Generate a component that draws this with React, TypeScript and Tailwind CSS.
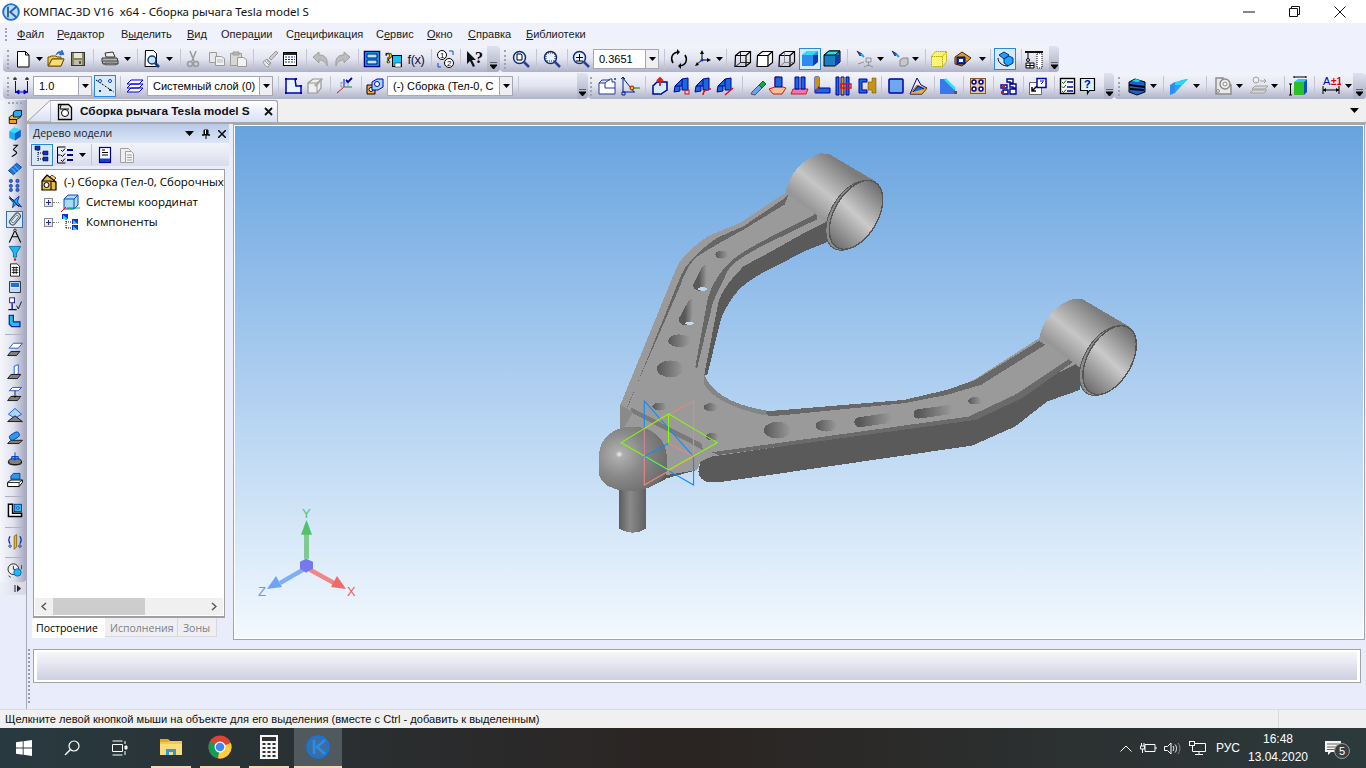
import type { ReactNode } from "react";

// small helpers for the toolbars
function Ic({ children, w = 20, h = 20 }: { children: ReactNode; w?: number; h?: number }) {
  return (
    <svg width={w} height={h} viewBox={`0 0 ${w} ${h}`} className="block shrink-0">
      {children}
    </svg>
  );
}

function S({ c, children }: { c: string; children?: ReactNode }) {
  return <div className={`flex items-center justify-center shrink-0 ${c}`}>{children}</div>;
}

const Drop = () => (
  <Ic w={7} h={4}>
    <path d="M0 0h7L3.5 4z" fill="#000" />
  </Ic>
);
const Sep = () => <div className="w-px h-[21px] bg-[#c3c5d3] shrink-0" />;
const Grip = () => <div className="w-0 h-[19px] border-l-2 border-dotted border-[#a0a2b8]" />;
const Handle = ({ c }: { c: string }) => (
  <div className={`h-full shrink-0 flex items-end justify-center pb-[3px] rounded-r-[4px] bg-linear-to-b from-[#dfe2ee] to-[#a9abc2] ${c}`}>
    <Ic w={7} h={7}>
      <path d="M0 0h7M0 3h7L3.5 7z" fill="#000" stroke="#000" strokeWidth="1" />
    </Ic>
  </div>
);

function Combo({ c, text }: { c: string; text: string }) {
  return (
    <div className={`h-[20px] shrink-0 flex border border-[#a6a7b3] bg-white ${c}`}>
      <div className="flex-1 overflow-hidden whitespace-nowrap pl-[5px] leading-[18px] text-[11px] text-black">{text}</div>
      <div className="w-[13px] bg-[#eeeef3] border-l border-[#a6a7b3] flex items-center justify-center">
        <Drop />
      </div>
    </div>
  );
}

function Sel({ children }: { children: ReactNode }) {
  return (
    <div className="w-[22px] h-[22px] shrink-0 flex items-center justify-center border border-[#2a88d8] bg-[#d8eafa]">
      {children}
    </div>
  );
}

const N = "#00009c";
const G = "#9b9b9b";

// --- row 1 icons
const INew = () => (
  <Ic>
    <path d="M4.5 2.5h8l3.5 3.5v12H4.5z" fill="#fff" stroke="#000" />
    <path d="M12.5 2.5v3.5H16" fill="none" stroke="#000" />
  </Ic>
);
const IOpen = () => (
  <Ic>
    <path d="M2 17V8h2l1-1h5l1 1h4v2H6l-4 7h13l3-7h-3" fill="#f3c94f" stroke="#6d5200" />
    <path d="M2.500 17l3.500-7h12l-3 7z" fill="#f8dc7c" stroke="#6d5200" />
    <path d="M10 6c1-3 3-4 5-3.500l1-1.500 2 4.500-4.500 .5 1-1.500c-2-.5-3 0-4.500 1.500z" fill="#1878e8" stroke="#0040a0" strokeWidth=".5" />
  </Ic>
);
const ISave = () => (
  <Ic>
    <rect x="3.500" y="3.500" width="13" height="13" fill="#8d865a" stroke="#333" />
    <rect x="6" y="4" width="8" height="5" fill="#e5e5d8" />
    <rect x="6" y="11" width="8" height="5" fill="#bdbdb0" />
    <rect x="11" y="12" width="2" height="3" fill="#555" />
  </Ic>
);
const IPrint = () => (
  <Ic>
    <path d="M5 4l8-1 2 5H6z" fill="#eee" stroke="#333" />
    <path d="M2 9h15l1 3v3H3l-1-3z" fill="#b4b4b4" stroke="#333" />
    <path d="M3 12h15" stroke="#444" />
    <path d="M5 14h11v2H5z" fill="#888" stroke="#333" strokeWidth=".5" />
    <rect x="14" y="10" width="2" height="1" fill="#e8d020" />
  </Ic>
);
const IPreview = () => (
  <Ic>
    <path d="M3.500 1.500h8l3 3v13h-11.500z" fill="#fff" stroke="#000" />
    <circle cx="10" cy="11" r="4" fill="#cfe4ff" stroke="#00408c" strokeWidth="1.500" />
    <path d="M13 14l4 4" stroke="#00408c" strokeWidth="2.500" />
  </Ic>
);
const ICut = () => (
  <Ic>
    <path d="M7 2l4 10M13 2l-4 10" stroke={G} strokeWidth="1.500" />
    <circle cx="7" cy="15" r="2.500" fill="none" stroke={G} strokeWidth="1.500" />
    <circle cx="13" cy="15" r="2.500" fill="none" stroke={G} strokeWidth="1.500" />
  </Ic>
);
const ICopy = () => (
  <Ic>
    <path d="M2.500 3.500h7v10h-7z" fill="#e8e8e8" stroke={G} />
    <path d="M8.500 7.500h6l3 2v7h-9z" fill="#f2f2f2" stroke={G} />
    <path d="M10 11h6M10 13h6" stroke="#b8b8b8" />
  </Ic>
);
const IPaste = () => (
  <Ic>
    <path d="M2.500 4.500h11v12h-11z" fill="#d8d8d0" stroke={G} />
    <path d="M5 3h6v3H5z" fill="#b8b8b8" stroke={G} />
    <path d="M9.500 8.500h6l3 2v7h-9z" fill="#f2f2f2" stroke={G} />
  </Ic>
);
const IBrush = () => (
  <Ic>
    <path d="M3 13l4-3 4 4-3 4c-2 0-4-3-5-5z" fill="#ececec" stroke={G} />
    <path d="M9 9l7-7 2 2-7 7z" fill="#ccc" stroke={G} />
    <path d="M5 12l4 4M7 11l3 4" stroke={G} />
  </Ic>
);
const ITable = () => (
  <Ic>
    <rect x="3.500" y="3.500" width="13" height="13" fill="#fff" stroke="#000" />
    <path d="M4 4h12v2H4z" fill="#222" />
    <path d="M5 8h10M5 10.500h10M5 13h10" stroke="#0030c0" strokeDasharray="2 1" />
  </Ic>
);
const IUndo = ({ flip }: { flip?: boolean }) => (
  <Ic>
    <g transform={flip ? "translate(20 0) scale(-1 1)" : undefined}>
      <path d="M2 8l6-5v3c6 0 9 3 8 11-1-4-4-6-8-6v3z" fill="#bdbdbd" stroke="#a0a0a0" />
    </g>
  </Ic>
);
const IBlueBox = () => (
  <Ic>
    <rect x="2.500" y="2.500" width="15" height="15" fill="#14c0f0" stroke="#000080" strokeWidth="1.500" />
    <rect x="5" y="5" width="10" height="4" fill="#b0ecff" stroke="#000080" />
    <rect x="5" y="11" width="10" height="4" fill="#b0ecff" stroke="#000080" />
  </Ic>
);
const IYellowQ = () => (
  <Ic>
    <rect x="8.500" y="6.500" width="9" height="11" fill="#1cc0f0" stroke="#000" />
    <rect x="11" y="14" width="6" height="4" fill="#fff" stroke="#000" strokeWidth=".5" />
    <text x="1" y="14" fontSize="15" fontWeight="700" fill="#f0e020" stroke="#000" strokeWidth=".7" fontFamily="Liberation Serif">?</text>
  </Ic>
);
const IFx = () => <span className="font-['Liberation_Sans'] text-[13px] leading-none text-[#101050] tracking-[-0.5px]">f(x)</span>;
const I12 = () => (
  <Ic>
    <circle cx="6" cy="6" r="4.500" fill="#fff" stroke="#000" />
    <circle cx="13" cy="14" r="4.500" fill="#fff" stroke="#000" />
    <text x="4" y="9" fontSize="8" fontFamily="Liberation Sans" fill="#000">1</text>
    <text x="11" y="17" fontSize="8" fontFamily="Liberation Sans" fill="#000">2</text>
    <path d="M13 2h4v4M5 18H2v-4" fill="none" stroke="#0050d0" />
  </Ic>
);
const IArrowQ = () => (
  <Ic>
    <path d="M1 2v13l3-3 3 6 2-1-3-6h4z" fill="#101018" />
    <text x="9" y="14" fontSize="16" fontWeight="700" fill="#000" fontFamily="Liberation Serif">?</text>
  </Ic>
);
const Lens = ({ children }: { children?: ReactNode }) => (
  <Ic>
    <circle cx="8.500" cy="8.500" r="6" fill="#e8f2ff" stroke="#0c2e7a" strokeWidth="1.500" />
    {children}
    <path d="M13 13l5 5" stroke="#2a3f95" strokeWidth="2.500" />
  </Ic>
);
const IRotate = () => (
  <Ic>
    <path d="M4 14C1 9 3 4 9 3M16 6c3 5 1 10-5 11" fill="none" stroke="#000" strokeWidth="1.500" />
    <path d="M8 0l3 3-3 3zM12 14l-3 3 3 3z" fill="#000" />
  </Ic>
);
const IAxes = () => (
  <Ic>
    <path d="M9 11V3M9 11l7 0M9 11l-6 5" stroke="#000" fill="none" />
    <path d="M9 1l-2 4h4zM18 11l-4-2v4zM2 17l4-1-2-3z" fill="#000" />
    <circle cx="9" cy="11" r="1.500" fill="#1030d0" />
  </Ic>
);
const ICube = ({ variant }: { variant: number }) => (
  <Ic>
    <path d="M2.500 6.500l5-4h10v11l-5 4h-10.500z" fill={variant === 1 ? "#fff" : "none"} stroke="#000" strokeWidth="1.200" />
    <path d="M2.500 6.500h10.500v11M13 6.500l4.500-4" fill="none" stroke="#000" strokeWidth="1.200" />
    {variant !== 1 && <path d="M7.500 2.500v11H17.500M7.500 13.500l-5 4" fill="none" stroke={variant === 0 ? "#000" : "#777"} strokeWidth=".8" />}
  </Ic>
);
const ISolid = ({ dark }: { dark?: boolean }) => (
  <Ic>
    <path d="M2 6l5-4h11v11l-5 4H2z" fill={dark ? "#1c7ec0" : "#2a8cf0"} stroke={dark ? "#000" : "none"} />
    <path d="M2 6l5-4h11l-5 4z" fill="#28e0ee" stroke={dark ? "#000" : "none"} />
    <path d="M13 6h5v7l-5 4z" fill="#0c3fa8" />
  </Ic>
);
const ILight = ({ cube }: { cube?: boolean }) => (
  <Ic>
    <path d="M2 2l5 3-2 2z" fill="#1858c8" stroke="#003" strokeWidth=".6" />
    <path d="M6 5l3 3" stroke="#20a0ff" strokeWidth="2" />
    {cube ? (
      <path d="M10 11l3-2h5v6l-3 2h-5z" fill="#c8c8c8" stroke="#888" />
    ) : (
      <path d="M11 9h5v4h-5zM13.500 13v4M9 18l4.500-2 4.500 2M3 15l6-2" fill="none" stroke="#909090" />
    )}
  </Ic>
);
const IYellowBox = () => (
  <Ic>
    <path d="M2.500 7.500l4-5h11v10l-4 5h-11z" fill="#f8f578" stroke="#b8a800" strokeDasharray="1.500 .7" />
    <path d="M2.500 7.500h11v10M13.500 7.500l4-5" fill="none" stroke="#b8a800" strokeDasharray="1.500 .7" />
  </Ic>
);
const IDiamond = () => (
  <Ic>
    <path d="M2 8L9 3l9 6-9 8-7-2z" fill="#e89a20" stroke="#402800" />
    <path d="M4 8h8v7H4z" fill="#0a30c0" stroke="#000060" />
    <path d="M6 10h4v3H6z" fill="#fff" />
  </Ic>
);
const IWrap = () => (
  <Ic>
    <path d="M4 6l5-3 5 3-5 4z" fill="#20a0f0" stroke="#003090" />
    <path d="M9 10l5-3 4 2v5l-5 3-4-3z" fill="#1ca8ff" stroke="#003090" />
    <path d="M3 9c0 5 5 8 10 8" fill="none" stroke="#000" />
  </Ic>
);
const ICrane = () => (
  <Ic>
    <path d="M1 2h18v2H1z" fill="#111" />
    <path d="M13 4h5v15h-5z" fill="#fff" stroke="#000" strokeDasharray="1 1" />
    <path d="M4 4v5" stroke="#000" />
    <circle cx="4" cy="11" r="1.500" fill="none" stroke="#000" />
    <path d="M2 14h8v5H2zM6 14v5M2 16.500h8" fill="#fff" stroke="#000" />
  </Ic>
);

// --- row 2 icons
const IDim = () => (
  <Ic>
    <path d="M3 1v3M1 3h4M15 1v3M13 3h4" stroke="#000" />
    <path d="M3.500 5v12M15.500 5v12" stroke="#0000d0" />
    <path d="M4 16h11M4 16l3-2v4zM15 16l-3-2v4z" fill="#0000d0" stroke="#0000d0" />
  </Ic>
);
const ISnap = () => (
  <Ic>
    <path d="M1 4l18 12" stroke="#000" strokeDasharray="2 1.500" />
    <circle cx="5" cy="5" r="1.500" fill="#fff" stroke="#0040c0" />
    <circle cx="15" cy="5" r="1.500" fill="#fff" stroke="#0040c0" />
    <path d="M14 14h2M15 13v2M4 15h2M5 14v2" stroke="#000" />
  </Ic>
);
const ILayers = () => (
  <Ic>
    <path d="M2 8l4-4h12l-4 4zM2 12l4-4h12l-4 4zM2 16l4-4h12l-4 4z" fill="#fff" stroke="#0000e0" />
  </Ic>
);
const IPoly = () => (
  <Ic>
    <path d="M3 3h9l1 7h5v7H3z" fill="#e8f4ff" stroke="#0000c0" strokeWidth="1.500" />
    <path d="M2 2h2v2H2zM12 2h2v2h-2zM2 16h2v2H2zM17 16h2v2h-2zM17 9h2v2h-2z" fill="#0000c0" />
  </Ic>
);
const IPolyGray = () => (
  <Ic>
    <path d="M3 7l5-4h8v9l-4 5H3z" fill="#efefef" stroke="#969696" strokeWidth="1.200" />
    <path d="M3 7h9v10M12 7l4-4" fill="none" stroke="#969696" />
    <path d="M9 9l8-7 1 1-7 8z" fill="#aaa" />
  </Ic>
);
const ICsys = () => (
  <Ic>
    <path d="M9 11V3" stroke="#0000e0" />
    <path d="M9 11h8" stroke="#00a000" />
    <path d="M9 11l-7 6" stroke="#e01010" />
    <path d="M6 6l3 2 4-2v5H6z" fill="none" stroke="#80a0d0" />
    <path d="M11 4l2 2 4-4" fill="none" stroke="#0000a0" strokeWidth="1.800" />
  </Ic>
);
const IAsm = () => (
  <Ic>
    <path d="M2 9h8v9H2z" fill="#f0b040" stroke="#000" />
    <circle cx="6" cy="13.500" r="2" fill="#fff" stroke="#000" />
    <path d="M7 6l5-3h6v8l-5 3H7z" fill="#9ed8ff" stroke="#0000c0" />
    <circle cx="12" cy="8" r="2.500" fill="#fff" stroke="#0000c0" />
  </Ic>
);
const IPartGray = () => (
  <Ic>
    <path d="M2 7h6l5-4h2v3h3v12H2z" fill="#fff" stroke="#2038a0" />
    <path d="M8 7v5h10M2 7l3-3h8" fill="none" stroke="#2038a0" />
    <circle cx="18" cy="3" r="1" fill="#2038a0" />
  </Ic>
);
const IPointer = () => (
  <Ic>
    <path d="M3 2v14h12M3 2l11 14" fill="none" stroke="#0020a0" />
    <circle cx="12" cy="12" r="2" fill="#f0c020" stroke="#c00000" />
    <path d="M14 12h6" stroke="#008000" />
    <path d="M1 3l2-2 2 2M2 16h3v3H2z" fill="none" stroke="#0020a0" />
  </Ic>
);
const Prof = ({ children }: { children?: ReactNode }) => (
  <Ic>
    <path d="M2 16l1-6 7-7 6-1v12h-6v-4H8v5z" fill="#1c68d8" stroke={N} />
    <path d="M10 3v7M3 10h5" stroke={N} fill="none" />
    {children}
  </Ic>
);
const IExtrude = () => (
  <Ic>
    <path d="M3 10h8v8H3z" fill="#d8ecff" stroke={N} strokeWidth="1.500" />
    <path d="M3 10l4-4h10v8l-6 4" fill="#d8ecff" stroke={N} strokeWidth="1.500" />
    <path d="M10 10V3M7 5l3-3 3 3" fill="none" stroke="#e01818" strokeWidth="1.800" />
  </Ic>
);
const ISlot = () => (
  <Ic>
    <path d="M5 16l11-11 3 3-11 11-4-1z" fill="#6aa4ec" stroke="#555" />
    <path d="M12 9l4-4 3 3-4 4z" fill="#11a840" stroke="#065" />
  </Ic>
);
const IPlateU = () => (
  <Ic>
    <path d="M7 1h4v9l7 2-4 6H5l-4-5 6-2z" fill="#f4c090" stroke="#e01010" />
    <path d="M7 1h7v10H7z" fill="#1a68e0" stroke={N} />
  </Ic>
);
const IPlateDouble = () => (
  <Ic>
    <path d="M3 13h15l-2 5H1z" fill="#f078b0" stroke="#e01010" />
    <path d="M5 1h4v12H5zM11 1h4v12h-4z" fill="#1a68e0" stroke={N} />
  </Ic>
);
const ICorner = () => (
  <Ic>
    <path d="M3 1h4v11h11v5H3z" fill="#1a68e0" stroke={N} />
    <path d="M3 1h4v9L3 14z" fill="#c8960c" />
    <path d="M3 17L8 11" stroke="#e01010" />
  </Ic>
);
const IBars = () => (
  <Ic>
    <path d="M3 1h3v18H3z" fill="#1a68e0" stroke={N} />
    <path d="M8 1h3v18H8z" fill="#e0a010" stroke={N} />
    <path d="M13 1h3v18h-3z" fill="#1a68e0" stroke={N} />
    <path d="M8 8h10v4H8z" fill="none" stroke="#e01010" strokeWidth="1.400" />
  </Ic>
);
const IBracket = () => (
  <Ic>
    <path d="M2 3h8v3H5v8h5v3H2z" fill="#1a68e0" stroke={N} />
    <path d="M11 6h4V2h4v15h-4v-3h-4z" fill="#c8960c" stroke="#604000" strokeWidth=".5" />
  </Ic>
);
const ISquare = () => (
  <Ic>
    <rect x="3" y="3" width="14" height="14" rx="1" fill="#6aa8f0" stroke={N} strokeWidth="1.500" />
  </Ic>
);
const IChamfer = () => (
  <Ic>
    <path d="M2 18L9 2l4 7 6 3-5 6z" fill="#f8f0d8" stroke={N} />
    <path d="M2 18l7-9 7 3 3 0-5 6z" fill="#e8b040" stroke="#604000" strokeWidth=".6" />
    <path d="M5 16l5-6 6 3" fill="#1a68e0" stroke={N} />
  </Ic>
);
const IFillet = () => (
  <Ic>
    <path d="M2 3h5l10 10v5H2z" fill="#3a78e8" />
    <path d="M7 3l10 10" stroke="#20e8f0" strokeWidth="2.500" />
    <rect x="16" y="15" width="3" height="3" fill="#555" />
  </Ic>
);
const IArray = () => (
  <Ic>
    <rect x="2.500" y="2.500" width="15" height="15" fill="#e8c890" stroke="#8a5a20" />
    {[6, 13].map((x) => [6, 13].map((y) => <circle key={`${x}${y}`} cx={x} cy={y} r="2" fill="#fff" stroke={N} strokeWidth="1.500" />))}
  </Ic>
);
const ITreeBlocks = () => (
  <Ic>
    <path d="M9 3h6v4h-3v-1H9zM12 8h6v4h-3v-1h-3zM3 9h6v3H3zM5 14h5v4H5zM12 13h6v5h-6z" fill="#fff" stroke={N} strokeWidth="1.400" />
    <rect x="4" y="9" width="3" height="3" fill="#e01010" />
    <rect x="3" y="15" width="3" height="3" fill="#e01010" />
  </Ic>
);
const IRebuild = () => (
  <Ic>
    <path d="M1.500 6.500h12v12h-12z" fill="#fff" stroke="#666" />
    <path d="M9 2.500h9v9H9z" fill="#fff" stroke="#0000c0" strokeWidth="1.500" />
    <path d="M12 5h4M13 8l2-2" stroke="#0000c0" />
    <path d="M4 15l5-5M4 11v4h4" fill="none" stroke="#000" strokeWidth="1.500" />
  </Ic>
);
const IChecklist = () => (
  <Ic>
    <rect x="2.500" y="2.500" width="14" height="15" fill="#fff" stroke="#000" strokeWidth="1.400" />
    <path d="M4 6l1.500 1.500L8 4.500M4 10.500l1.500 1.500L8 9M4 15l1.500 1.500L8 13.500" fill="none" stroke="#006000" />
    <path d="M9 6h6M9 11h6M9 15h6" stroke="#0000c0" strokeWidth="1.500" />
  </Ic>
);
const IHelp = () => (
  <Ic>
    <path d="M2.500 2.500h14v12h-5l-2 3v-3h-7z" fill="#d8f2ff" stroke="#000" strokeWidth="1.200" />
    <text x="6" y="12" fontSize="11" fontWeight="700" fill="#00009c" fontFamily="Liberation Sans">?</text>
  </Ic>
);
const IStripe = () => (
  <Ic>
    <path d="M2 6l6-3 10 3v10l-8 3-8-3z" fill="#2060d0" stroke="#000" />
    <path d="M2 9l16 2M3 13l14 1" stroke="#000" strokeWidth="2" />
    <path d="M5 5l4-2 5 2-4 1z" fill="#20e0f0" />
  </Ic>
);
const IBeam = () => (
  <Ic>
    <path d="M1 9l5-3v11l-5 2z" fill="#2c8cf0" />
    <path d="M1 9l12-5 6-1-6 6-7 8V6z" fill="#28a0ff" />
    <path d="M6 6l13-3-6 6H6z" fill="#26d8f4" />
  </Ic>
);
const IGrayPart = () => (
  <Ic>
    <path d="M3 2h7v7h8v9H3z" fill="#e8e8e8" stroke="#8a8a8a" strokeWidth="1.400" />
    <circle cx="12" cy="8" r="5" fill="#eee" stroke="#8a8a8a" strokeWidth="1.400" />
    <circle cx="12" cy="8" r="2" fill="#fff" stroke="#8a8a8a" />
    <circle cx="5" cy="15" r="1.500" fill="none" stroke="#8a8a8a" />
  </Ic>
);
const IGraySheet = () => (
  <Ic>
    <circle cx="7" cy="4" r="3" fill="none" stroke="#a0a0a0" />
    <path d="M11 5h6M15 3l2 2-2 2" fill="none" stroke="#a0a0a0" />
    <path d="M3 13l3-3h13l-3 3zM1 17l3-3h14l-3 3z" fill="#d8d8d8" stroke="#a0a0a0" />
  </Ic>
);
const IGreenBox = () => (
  <Ic>
    <path d="M0 8h3M0 19h3M1.500 8v11M5 2v-2M17 2v-2M5 1h12" stroke="#000" />
    <path d="M5 6h10v13H5z" fill="#2cc028" />
    <path d="M5 6l4-3h9l-3 3z" fill="#30c8f0" />
    <path d="M15 6l3-3v13l-3 3z" fill="#0c50c0" />
  </Ic>
);
const ITol = () => (
  <Ic>
    <text x="2" y="9" fontSize="11" fill="#0000c0" fontFamily="Liberation Sans">A</text>
    <text x="10" y="9" fontSize="10" fontWeight="700" fill="#e00000" fontFamily="Liberation Sans">±1</text>
    <path d="M2 10v8M18 10v8M2 14h16" stroke="#000" />
    <path d="M2 14l3-2v4zM18 14l-3-2v4z" fill="#000" />
  </Ic>
);

// --- tree and side bar icons
const ITreeView = () => (
  <Ic>
    <path d="M6 3v14M6 8h6M6 14h6" stroke="#000" strokeDasharray="1 1" />
    <path d="M3 1h5v4H3zM11 6h5v4h-5zM11 12h5v4h-5z" fill="#1030d0" stroke="#000" strokeWidth=".5" />
  </Ic>
);
const IListCheck = () => (
  <Ic>
    <path d="M2.500 2h8M2.500 2v16M2.500 10h3M2.500 18h8" stroke="#000" fill="none" />
    <path d="M6 5l1.500 1.500L10 3.500M6 10l1.500 1.500L10 8.500M6 15l1.500 1.500L10 13.500" stroke="#000" fill="none" />
    <path d="M12 5h6M12 10h6M12 15h6" stroke="#00009c" strokeWidth="2" />
  </Ic>
);
const IBook = () => (
  <Ic>
    <rect x="4.500" y="2.500" width="11" height="15" fill="#fff" stroke="#000090" strokeWidth="1.200" />
    <path d="M7 5h3M7 7.500h6M7 10h6" stroke="#000" />
    <rect x="5" y="13.500" width="10" height="3.500" fill="#1040d8" />
  </Ic>
);
const IBookGray = () => (
  <Ic>
    <path d="M3.500 3.500h8l2 2v12h-10z" fill="#eee" stroke="#a0a0a0" />
    <path d="M8.500 6.500h6l2 2v9h-8z" fill="#f4f4f4" stroke="#a0a0a0" />
    <path d="M10 10h5M10 12.500h5M10 15h5" stroke="#a0a0a0" />
  </Ic>
);
const IAsmTree = () => (
  <Ic>
    <path d="M3 9l5-6 9 7v8H3z" fill="#f0b848" stroke="#000" strokeWidth="1.200" />
    <path d="M3 9h9l5 1M12 9v9" fill="none" stroke="#000" />
    <circle cx="7.500" cy="13" r="2.500" fill="#fff" stroke="#000" />
    <path d="M11 5l2-2 4 3-2 2z" fill="#f8d880" stroke="#000" strokeWidth=".7" />
  </Ic>
);
const ICoordTree = () => (
  <Ic>
    <path d="M4 7l4-4h10v10l-4 4M14 7l4-4" fill="#a8dcf4" stroke="#1048c0" />
    <path d="M4 7h10v10H4z" fill="#a8dcf4" stroke="#1048c0" />
    <path d="M7 16h13" stroke="#00a040" />
    <path d="M6 15l-5 5" stroke="#e01010" />
  </Ic>
);
const ICompTree = () => (
  <Ic>
    <path d="M6 7v10M6 10h6M6 16h6" stroke="#000" strokeDasharray="1 1" />
    <path d="M2 2h6v5H2zM12 7h6v5h-6zM12 13h6v5h-6z" fill="#1030d8" />
    <path d="M3 3l5 4H3zM13 8l5 4h-5zM13 14l5 4h-5z" fill="#20d8f0" />
  </Ic>
);
const Plus = () => (
  <div className="w-[9px] h-[9px] border border-[#8a8a8a] bg-linear-to-br from-white to-[#d8d8e0] flex items-center justify-center shrink-0">
    <Ic w={7} h={7}>
      <path d="M1 3.500h5M3.500 1v5" stroke="#1c2a88" />
    </Ic>
  </div>
);

const side: { h: string; node?: ReactNode; sep?: boolean; sel?: boolean }[] = [
  { h: "h-[16px]", node: <Ic><path d="M3 10l5-3h9v3l-5 3H3z" fill="#f0c040" stroke="#000" /><path d="M3 13h9v5H3z" fill="#f0a020" stroke="#000" /><path d="M8 4l3-2h7v6l-3 2H8z" fill="#30a8f0" stroke="#000" /></Ic> },
  { h: "h-[17px]", node: <Ic><path d="M3 7l6-5 8 3v8l-7 5-7-3z" fill="#28a8f0" /><path d="M3 7l6-5 8 3-7 4z" fill="#30e0f8" /><path d="M10 9l7-4v8l-7 5z" fill="#1060d0" /></Ic> },
  { h: "h-[18px]", node: <Ic><path d="M8 3h5l-5 5c0 2 4 2 4 4s-5 4-6 5" fill="none" stroke="#000" strokeWidth="1.300" /></Ic> },
  { h: "h-[17px]", node: <Ic><path d="M2 12l10-9 6 5-10 9z" fill="#1c78e0" stroke="#003090" /><path d="M6 9l6 6M9 6l6 6" stroke="#80d8ff" /></Ic> },
  { h: "h-[16px]", node: <Ic>{[5, 13].map((x) => [5, 11, 16].map((y) => <circle key={`${x}${y}`} cx={x} cy={y} r="2" fill="#3068e0" stroke="#002090" strokeWidth=".7" />))}</Ic> },
  { h: "h-[17px]", node: <Ic><path d="M3 5l6 3 6-5-2 7 5 6-7-3-4 4 1-6z" fill="#20a8f0" stroke="#0020a0" /><path d="M3 3l12 13" stroke="#000" /></Ic> },
  { h: "h-[18px]", sel: true, node: <Ic><rect x="6" y="1" width="8" height="18" rx="4" transform="rotate(40 10 10)" fill="none" stroke="#555" strokeWidth="1.500" /><rect x="8" y="4" width="4" height="12" rx="2" transform="rotate(40 10 10)" fill="none" stroke="#555" /></Ic> },
  { h: "h-[16px]", node: <Ic><path d="M10 3L3 18M10 3l7 15M6 11h8" fill="none" stroke="#000" strokeWidth="1.300" /><circle cx="10" cy="3" r="1.500" fill="#fff" stroke="#000" /></Ic> },
  { h: "h-[17px]", node: <Ic><path d="M3 2h14l-5 8v5H8v-5z" fill="#20b8f0" stroke="#0060a0" /><circle cx="10" cy="18" r="1.500" fill="#e01010" /></Ic> },
  { h: "h-[18px]", node: <Ic><path d="M4.500 2.500h8l3 3v12h-11z" fill="#fff" stroke="#000" /><path d="M6 7h8M6 10h8M6 13h8M8.500 6v9M11.500 6v9" stroke="#000" /></Ic> },
  { h: "h-[16px]", node: <Ic><rect x="3.500" y="3.500" width="13" height="13" fill="#e8f0ff" stroke="#000" /><rect x="5" y="5" width="10" height="5" fill="#1c70d8" /><rect x="5" y="11" width="10" height="4" fill="#b8d8ff" /></Ic> },
  { h: "h-[17px]", node: <Ic><rect x="3.500" y="2.500" width="6" height="6" fill="#fff" stroke="#000080" /><path d="M6.500 9v7M2 17h10" stroke="#000080" strokeWidth="1.500" /><path d="M12 12l2 4 4-9" fill="none" stroke="#000" /></Ic> },
  { h: "h-[18px]", node: <Ic><path d="M3 3h5v8h8v6H6l-3-3z" fill="#20c0f0" stroke="#0020a0" strokeWidth="1.500" /></Ic> },
  { h: "h-[8px]", sep: true },
  { h: "h-[22px]", node: <Ic><path d="M3 9l5-6h11l-5 6z" fill="#fff" stroke="#0040e0" /><path d="M1 18l4-5h11l-4 5z" fill="#808080" stroke="#000" /></Ic> },
  { h: "h-[23px]", node: <Ic><path d="M9 3l5-2v11l-5 3z" fill="#fff" stroke="#0040e0" /><path d="M1 18l4-5h12l-4 5z" fill="#808080" stroke="#000" /></Ic> },
  { h: "h-[21px]", node: <Ic><path d="M3 6l4-4h11l-4 4z" fill="#fff" stroke="#0040e0" /><path d="M1 18l4-5h12l-4 5z" fill="#808080" stroke="#000" /><path d="M10 6v8M8 12l2 2 2-2" fill="none" stroke="#000" /></Ic> },
  { h: "h-[22px]", node: <Ic><path d="M2 9l8-7 8 7-8 5z" fill="#a8d8ff" stroke="#0040e0" /><path d="M1 18l9-7 9 7z" fill="#808080" stroke="#000" /></Ic> },
  { h: "h-[22px]", node: <Ic><path d="M1 18l4-4h14l-4 4z" fill="#808080" stroke="#000" /><rect x="3" y="5" width="13" height="7" rx="3.500" transform="rotate(-30 10 9)" fill="#2898f0" stroke="#0040a0" /></Ic> },
  { h: "h-[21px]", node: <Ic><ellipse cx="10" cy="13" rx="8" ry="4" fill="#808080" stroke="#000" /><path d="M2 13v2c0 3 16 3 16 0v-2" fill="none" stroke="#000" /><path d="M6 7h8v3H6zM10 2v10" fill="#20b0f0" stroke="#0020c0" /></Ic> },
  { h: "h-[22px]", node: <Ic><path d="M1 13l4-3h14v3l-4 5H1z" fill="#fff" stroke="#000" strokeWidth="1.200" /><path d="M1 13h14v5M15 13l4-3" fill="none" stroke="#000" /><path d="M5 5l3-3h8v7H5z" fill="#2898f0" stroke="#003090" /></Ic> },
  { h: "h-[10px]", sep: true },
  { h: "h-[18px]", node: <Ic><path d="M2 3h5v11h11v4H2z" fill="#fff" stroke="#000" strokeWidth="1.800" /><rect x="9" y="3" width="9" height="9" fill="#20c0f0" stroke="#002090" /><circle cx="13.500" cy="7.500" r="1.500" fill="#fff" stroke="#002090" /></Ic> },
  { h: "h-[16px]", sep: true },
  { h: "h-[14px]", node: <Ic><path d="M9 3l3-2v15l-3 3z" fill="#f0b820" stroke="#806000" /><path d="M4 3c-2 3-2 6 0 9M16 3c2 3 2 6 0 9" fill="none" stroke="#0020c0" strokeWidth="1.500" /><circle cx="4" cy="15" r="1.500" fill="none" stroke="#002090" /><circle cx="16" cy="15" r="1.500" fill="none" stroke="#002090" /></Ic> },
  { h: "h-[16px]", sep: true },
  { h: "h-[10px]", node: <Ic><circle cx="8" cy="9" r="6.500" fill="#f0f0f0" stroke="#000" /><path d="M8 5v4l3 1" fill="none" stroke="#000" /><circle cx="13" cy="13" r="4.500" fill="#20b8f8" stroke="#0060a0" /><path d="M2 17l3 2M18 4v5" stroke="#333" /></Ic> },
];

function SideBar() {
  return (
    <div className="w-[27px] shrink-0 h-full border-r border-[#a9a9b3] bg-[#e9edfb] pt-px">
      <div className="w-[26px] rounded-br-[3px] bg-linear-to-r from-[#f6f7fd] via-[#e0e2ee] to-[#a5a7c0] pl-[3px]">
        <div className="h-[9px] flex items-start justify-center pt-[2px]">
          <div className="w-[14px] h-0 border-t-2 border-dotted border-[#a0a2b8]" />
        </div>
        {side.map((it, i) => (
          <div key={i} className={`${it.h} flex items-center justify-center`}>
            {it.sep ? (
              <div className="w-[19px] h-px bg-[#b0b2c2]" />
            ) : it.sel ? (
              <div className="w-[17px] h-[17px] shrink-0 flex items-center justify-center border border-[#3b6fa8] bg-[#d8eafa]">
                <div className="scale-[0.75]">{it.node}</div>
              </div>
            ) : (
              <div className="shrink-0 scale-[0.82]">{it.node}</div>
            )}
          </div>
        ))}
        <div className="h-[7px]" />
      </div>
      <div className="w-[26px] h-[13px] bg-linear-to-r from-[#eef0f8] to-[#d4d6e4] flex items-center justify-end pr-[4px] rounded-br-[2px]">
        <Ic w={8} h={7}>
          <path d="M1 0v7" stroke="#222" />
          <path d="M3 0l4 3.500L3 7z" fill="#222" />
        </Ic>
      </div>
    </div>
  );
}

function Tree() {
  return (
    <div className="ml-[2px] w-[200px] shrink-0 flex flex-col h-full">
      <div className="h-[19px] flex items-center pl-[4px] bg-linear-to-b from-[#b7c9e8] to-[#dde5f6] text-[10.5px] text-[#222] shrink-0">
        <span className="w-[152px]">Дерево модели</span>
        <Ic w={9} h={5}>
          <path d="M0 0h9L4.500 5z" fill="#000" />
        </Ic>
        <div className="w-[8px]" />
        <Ic w={8} h={10}>
          <path d="M2 1h4v5h2H0h2zM4 6v4" fill="#000" stroke="#000" />
          <path d="M3 1h1v4H3z" fill="#fff" />
        </Ic>
        <div className="w-[8px]" />
        <Ic w={8} h={8}>
          <path d="M0 0l8 8M8 0L0 8" stroke="#000" strokeWidth="1.500" />
        </Ic>
      </div>
      <div className="h-[23px] flex items-center pl-[2px] bg-linear-to-b from-[#f2f4fb] to-[#dadced] shrink-0">
        <Sel>
          <ITreeView />
        </Sel>
        <S c="w-[24px]"><IListCheck /></S>
        <S c="w-[10px]"><Drop /></S>
        <S c="w-[9px]"><Sep /></S>
        <S c="w-[18px]"><IBook /></S>
        <S c="w-[26px]"><IBookGray /></S>
      </div>
      <div className="flex-1 min-h-0 mt-[3px] mx-[4px] border border-[#a0a0a0] border-b-2 bg-white flex flex-col">
        <div className="flex-1 min-h-0 pt-[2px] pl-[5px] text-[11.5px] text-black overflow-hidden">
          <div className="h-[20px] flex items-center whitespace-nowrap">
            <IAsmTree />
            <span className="ml-[5px]">(-) Сборка (Тел-0, Сборочных</span>
          </div>
          <div className="h-[20px] flex items-center">
            <div className="ml-[5px]"><Plus /></div>
            <div className="w-[6px] h-0 border-t border-dotted border-[#888] mr-px" />
            <ICoordTree />
            <span className="ml-[6px]">Системы координат</span>
          </div>
          <div className="h-[20px] flex items-center">
            <div className="ml-[5px]"><Plus /></div>
            <div className="w-[6px] h-0 border-t border-dotted border-[#888] mr-px" />
            <ICompTree />
            <span className="ml-[6px]">Компоненты</span>
          </div>
        </div>
        <div className="h-[17px] mx-px mb-px bg-[#f0f0f0] flex items-center shrink-0">
          <S c="w-[18px]">
            <Ic w={6} h={9}><path d="M5 1L1 4.500 5 8" fill="none" stroke="#555" strokeWidth="1.500" /></Ic>
          </S>
          <div className="w-[92px] h-full bg-[#cdcdcd]" />
          <div className="flex-1" />
          <S c="w-[18px]">
            <Ic w={6} h={9}><path d="M1 1l4 3.500L1 8" fill="none" stroke="#555" strokeWidth="1.500" /></Ic>
          </S>
        </div>
      </div>
      <div className="h-[21px] shrink-0 flex ml-[3px] text-[10.5px] mb-[2px]">
        <div className="w-[73px] h-[20px] bg-white text-black pl-[4px] leading-[20px]">Построение</div>
        <div className="w-[73px] h-[19px] bg-[#efeff3] border-r border-b border-[#d8d8de] text-[#808080] pl-[5px] leading-[20px]">Исполнения</div>
        <div className="w-[39px] h-[19px] bg-[#efeff3] border-r border-b border-[#d8d8de] text-[#808080] pl-[5px] leading-[20px]">Зоны</div>
      </div>
    </div>
  );
}

function Cylinder({ id }: { id: string }) {
  return (
    <g>
      <defs>
        <linearGradient id={`${id}b`} gradientUnits="userSpaceOnUse" x1="680" y1="45" x2="575" y2="165">
          <stop offset="0" stopColor="#7c7c7c" />
          <stop offset=".6" stopColor="#c6c6c6" />
          <stop offset="1" stopColor="#979797" />
        </linearGradient>
        <linearGradient id={`${id}i`} gradientUnits="userSpaceOnUse" x1="778" y1="117" x2="710" y2="325">
          <stop offset="0" stopColor="#6c6c6c" />
          <stop offset=".5" stopColor="#cacaca" />
          <stop offset="1" stopColor="#6c6c6c" />
        </linearGradient>
      </defs>
      <path d="M548 155C555 105 590 55 645 37L668 38L802 122L780 220L700 320L665 295L668 248Z" fill={`url(#${id}b)`} />
      <ellipse cx="736" cy="223" rx="63" ry="112" transform="rotate(27 736 223)" fill="#8a8a8a" stroke="#5a5a5a" strokeWidth="3" />
      <ellipse cx="745" cy="221" rx="62" ry="111" transform="rotate(27 745 221)" fill={`url(#${id}i)`} stroke="#555" strokeWidth="4" />
    </g>
  );
}

const holes: [number, number, number, number][] = [
  [225, 682, 38, 25],
  [250, 598, 31, 19],
  [369, 340, 18, 12],
  [525, 866, 38, 25],
  [662, 852, 30, 18],
  [1078, 778, 19, 11],
  [195, 795, 20, 12],
  [338, 797, 20, 12],
  [343, 885, 18, 12],
];

function Arm() {
  return (
    <g transform="translate(590 140) scale(.35714 .33333)" shapeRendering="crispEdges">
      <defs>
        <linearGradient id="hole" gradientUnits="objectBoundingBox" x1="0" x2="1" y1="0" y2="0">
          <stop offset="0" stopColor="#585858" />
          <stop offset="1" stopColor="#9a9a9a" />
        </linearGradient>
        <linearGradient id="pin" x1="0" x2="1" y1="0" y2="0">
          <stop offset="0" stopColor="#5e5e5e" />
          <stop offset=".4" stopColor="#8a8a8a" />
          <stop offset="1" stopColor="#606060" />
        </linearGradient>
        <radialGradient id="ball" gradientUnits="userSpaceOnUse" cx="82" cy="938" r="170">
          <stop offset="0" stopColor="#f2f2f2" />
          <stop offset=".06" stopColor="#aeaeae" />
          <stop offset=".4" stopColor="#888" />
          <stop offset="1" stopColor="#5e5e5e" />
        </radialGradient>
      </defs>
      <path d="M660 225L670 300L600 330L520 375C470 400 430 425 405 460C385 490 370 520 365 540L328 702L318 700L360 480C370 450 385 425 430 375L500 335L600 275Z" fill="#5a5a5a" />
      <path d="M1372 650L1372 745L1280 780L1190 855L1070 912L360 1022L330 1022C310 1015 300 1000 305 980L310 960L340 945L1040 835C1070 830 1100 815 1130 795L1250 725Z" fill="#5a5a5a" />
      <path d="M160 1040L215 1010L300 985L305 960L215 960Z" fill="#5a5a5a" />
      <path d="M85 790L240 385C255 345 285 320 330 285L420 245L548 155L665 240L600 275L500 335L430 375C385 425 370 450 360 480L320 700C340 750 390 790 500 808L620 800L900 775C960 765 1020 745 1075 715L1258 590L1372 662L1250 725L1130 795C1100 815 1070 830 1040 835L340 945L310 960L300 985L215 1000L85 870Z" fill="#9a9a9a" />
      <path d="M320 700C340 750 390 790 500 808L490 822C400 800 340 770 318 725Z" fill="#858585" />
      <path d="M108 790L250 415C262 380 285 345 355 290L430 255L540 175L556 160L545 190L430 265C380 295 320 330 295 350C275 370 260 410 250 440L100 805Z" fill="#666" />
      <path d="M640 212L635 235L480 315C440 340 400 360 385 390L345 480L300 680L295 675L330 470C345 420 365 390 395 360C420 335 470 305 620 225Z" fill="#666" />
      <path d="M1258 598L1275 610L1095 730L1000 760L880 785L500 825L490 810L880 775L1000 745L1080 715Z" fill="#686868" />
      <path d="M1345 650L1355 660L1210 770L1080 835L360 940L340 932L1060 825L1190 760Z" fill="#6a6a6a" />
      <path d="M115 798L312 905L316 925L115 812Z" fill="#7a7a7a" />
      <path d="M85 790L120 812L100 850L85 870Z" fill="#8a8a8a" />
      {holes.map(([cx, cy, rx, ry]) => (
        <ellipse key={cx} cx={cx} cy={cy} rx={rx} ry={ry} fill="url(#hole)" />
      ))}
      <path d="M327 387L305 432" stroke="url(#hole)" strokeWidth="32" strokeLinecap="round" fill="none" />
      <ellipse cx="316" cy="443" rx="13" ry="5" fill="#c0d8f0" />
      <path d="M288 490L265 535" stroke="url(#hole)" strokeWidth="32" strokeLinecap="round" fill="none" />
      <ellipse cx="278" cy="546" rx="12" ry="4" fill="#c4daf2" />
      <path d="M755 842L845 828" stroke="url(#hole)" strokeWidth="30" strokeLinecap="round" fill="none" />
      <path d="M920 817L1015 803" stroke="url(#hole)" strokeWidth="28" strokeLinecap="round" fill="none" />
      <Cylinder id="c1" />
      <g transform="translate(710 435)">
        <Cylinder id="c2" />
      </g>
      <path d="M82 1030V1160Q120 1185 157 1160V1030Z" fill="url(#pin)" />
      <path d="M25 945C25 885 70 855 120 855C175 855 215 895 215 945V990C200 1030 150 1050 100 1048C60 1045 30 1025 25 1000Z" fill="url(#ball)" />
      <g fill="none" strokeWidth="3" shapeRendering="auto">
        <path d="M152 778V945L290 1030V945L152 778" stroke="#0a8cff" />
        <path d="M290 778L152 860V1030L290 945Z" stroke="#f08484" />
        <path d="M87 903L220 817L356 903L220 985Z" stroke="#84ff00" />
        <path d="M220 817V905" stroke="#84ff00" />
        <path d="M152 945L220 905" stroke="#0a8cff" />
        <path d="M220 905L290 945" stroke="#f08484" />
      </g>
    </g>
  );
}

function Triad() {
  return (
    <g fontFamily="Liberation Sans" fontSize="13">
      <path d="M304 531h5v26h-5z" fill="#7fcb8f" />
      <path d="M306.500 518L312 533H301z" fill="#53c06a" />
      <path d="M311 566l24 13-2 4-24-13z" fill="#f08686" />
      <path d="M346 587L331 585 337 574z" fill="#ee6b6b" />
      <path d="M302 566L279 579l2 4 23-13z" fill="#7fb0f5" />
      <path d="M267 587L282 585 276 574z" fill="#6fa4f5" />
      <path d="M300 560l6-3 7 3v7l-7 4-6-4z" fill="#7878ee" />
      <text x="302" y="516" fill="#52c070">Y</text>
      <text x="258" y="594" fill="#5c9cf5">Z</text>
      <text x="347" y="594" fill="#f05c5c">X</text>
    </g>
  );
}

function Chrome() {
  return (
    <Ic w={24} h={24}>
      <circle cx="12" cy="12" r="11.500" fill="#db4437" />
      <path d="M12 12L2 6.500A11.500 11.500 0 0 0 10 23.300z" fill="#0f9d58" />
      <path d="M12 12l10.800-4A11.500 11.500 0 0 1 10 23.300z" fill="#ffcd40" />
      <circle cx="12" cy="12" r="5.500" fill="#fff" />
      <circle cx="12" cy="12" r="4.300" fill="#4285f4" />
    </Ic>
  );
}

function Kompas({ s = 24, fill, k }: { s?: number; fill: string; k: string }) {
  return (
    <svg width={s} height={s} viewBox="0 0 24 24" className="block shrink-0">
      <circle cx="12" cy="12" r="10.500" fill={fill} stroke="#1a74d8" strokeWidth="2.500" />
      <path d="M8 5v14" stroke={k} strokeWidth="2.500" />
      <path d="M19 5l-8 7 8 7" fill="none" stroke={k} strokeWidth="2.500" />
    </svg>
  );
}

export default function App() {
  return (
    <div className="w-[1366px] h-[768px] flex flex-col overflow-hidden bg-[#eff2fc] font-['Open_Sans','Liberation_Sans',sans-serif] text-black">
      {/* title */}
      <div className="h-[23px] shrink-0 bg-white flex items-center pl-[2px] text-[11.5px] text-[#111]">
        <Kompas s={18} fill="#bcdcf8" k="#2a5f9e" />
        <span className="ml-[3px] whitespace-pre font-['Noto_Sans',sans-serif]">КОМПАС-3D V16  x64 - Сборка рычага Tesla model S</span>
        <div className="flex-1" />
        <S c="w-[46px]"><Ic w={12} h={2}><path d="M0 1h12" stroke="#111" /></Ic></S>
        <S c="w-[44px]"><Ic w={11} h={11}><path d="M.5 2.500h8v8h-8zM2.500 2.500v-2h8v8h-2" fill="none" stroke="#111" /></Ic></S>
        <S c="w-[48px]"><Ic w={12} h={12}><path d="M.5.5l11 11M11.500.5l-11 11" stroke="#111" /></Ic></S>
        <div className="w-[2px]" />
      </div>

      {/* menu */}
      <div className="h-[23px] shrink-0 flex items-center text-[11px] text-[#1a1a1a] font-['Liberation_Sans',sans-serif]">
        <S c="w-[17px]"><div className="h-[13px] w-0 border-l-2 border-dotted border-[#a0a2b8] -ml-[6px]" /></S>
        <div className="w-[40px]"><u>Ф</u>айл</div>
        <div className="w-[64px]"><u>Р</u>едактор</div>
        <div className="w-[66px]">В<u>ы</u>делить</div>
        <div className="w-[34px]"><u>В</u>ид</div>
        <div className="w-[65px]">Опера<u>ц</u>ии</div>
        <div className="w-[90px]">С<u>п</u>ецификация</div>
        <div className="w-[51px]">С<u>е</u>рвис</div>
        <div className="w-[41px]"><u>О</u>кно</div>
        <div className="w-[58px]"><u>С</u>правка</div>
        <div><u>Б</u>иблиотеки</div>
      </div>

      {/* toolbar row 1 */}
      <div className="h-[27px] shrink-0 flex pl-[3px] pb-px text-[12px] font-['Liberation_Sans',sans-serif]">
        <div className="h-full flex items-center rounded-[4px] bg-linear-to-b from-[#f4f5fb] via-[#e2e4f0] to-[#b0b2c8]">
          <S c="w-[10px]"><Grip /></S>
          <S c="w-[20px]"><INew /></S>
          <S c="w-[13px]"><Drop /></S>
          <S c="w-[20px]"><IOpen /></S>
          <S c="w-[24px]"><ISave /></S>
          <S c="w-[7px]"><Sep /></S>
          <S c="w-[26px]"><IPrint /></S>
          <S c="w-[8px]"><Drop /></S>
          <S c="w-[12px]"><Sep /></S>
          <S c="w-[18px]"><IPreview /></S>
          <S c="w-[16px]"><Drop /></S>
          <S c="w-[6px]"><Sep /></S>
          <S c="w-[20px]"><ICut /></S>
          <S c="w-[28px]"><ICopy /></S>
          <S c="w-[14px]"><IPaste /></S>
          <S c="w-[16px]"><Sep /></S>
          <S c="w-[18px]"><IBrush /></S>
          <S c="w-[22px]"><ITable /></S>
          <S c="w-[10px]"><Sep /></S>
          <S c="w-[20px]"><IUndo /></S>
          <S c="w-[22px]"><IUndo flip /></S>
          <S c="w-[10px]"><Sep /></S>
          <S c="w-[18px]"><IBlueBox /></S>
          <S c="w-[26px]"><IYellowQ /></S>
          <S c="w-[18px]"><IFx /></S>
          <S c="w-[12px]"><Sep /></S>
          <S c="w-[18px]"><I12 /></S>
          <S c="w-[10px]"><Sep /></S>
          <S c="w-[22px]"><IArrowQ /></S>
          <Handle c="w-[13px]" />
        </div>
        <div className="h-full flex items-center rounded-[4px] bg-linear-to-b from-[#f4f5fb] via-[#e2e4f0] to-[#b0b2c8]">
          <S c="w-[10px]"><Grip /></S>
          <S c="w-[22px]"><Lens><path d="M6 5h4l1 1v5H6z" fill="#fff" stroke="#000" /></Lens></S>
          <S c="w-[8px]"><Sep /></S>
          <S c="w-[24px]"><Lens><path d="M4 4h9v8H4z" fill="none" stroke="#223" strokeDasharray="1 1" /></Lens></S>
          <S c="w-[6px]"><Sep /></S>
          <S c="w-[22px]"><Lens><path d="M5 8.500h7M8.500 5v7M5 12h7" stroke="#000" fill="none" /></Lens></S>
          <Combo c="ml-px w-[66px]" text="0.3651" />
          <S c="w-[10px]"><Sep /></S>
          <S c="w-[20px]"><IRotate /></S>
          <S c="w-[28px]"><IAxes /></S>
          <S c="w-[4px]"><Drop /></S>
          <S c="w-[11px]"><Sep /></S>
          <S c="w-[22px]"><ICube variant={0} /></S>
          <S c="w-[22px]"><ICube variant={1} /></S>
          <S c="w-[22px]"><ICube variant={2} /></S>
          <div className="w-px" />
          <Sel><ISolid /></Sel>
          <S c="w-[22px]"><ISolid dark /></S>
          <S c="w-[8px]"><Sep /></S>
          <S c="w-[28px]"><ILight /></S>
          <S c="w-[2px]"><Drop /></S>
          <div className="w-[9px]" />
          <S c="w-[20px]"><ILight cube /></S>
          <S c="w-[10px]"><Drop /></S>
          <S c="w-[10px]"><Sep /></S>
          <S c="w-[18px]"><IYellowBox /></S>
          <S c="w-[30px]"><IDiamond /></S>
          <S c="w-[8px]"><Drop /></S>
          <S c="w-[8px]"><Sep /></S>
          <Sel><IWrap /></Sel>
          <S c="w-[10px]"><Sep /></S>
          <S c="w-[16px]"><ICrane /></S>
          <div className="w-[7px]" />
          <Handle c="w-[10px]" />
        </div>
      </div>

      {/* toolbar row 2 */}
      <div className="h-[26px] shrink-0 flex pl-[3px] text-[12px] font-['Liberation_Sans',sans-serif]">
        <div className="h-full flex items-center rounded-[4px] bg-linear-to-b from-[#f4f5fb] via-[#e2e4f0] to-[#b0b2c8]">
          <S c="w-[10px]"><Grip /></S>
          <S c="w-[18px]"><IDim /></S>
          <Combo c="ml-[2px] w-[59px]" text="1.0" />
          <div className="w-[2px]" />
          <Sel><ISnap /></Sel>
          <S c="w-[8px]"><Sep /></S>
          <S c="w-[22px]"><ILayers /></S>
          <Combo c="ml-px w-[126px]" text="Системный слой (0)" />
          <S c="w-[10px]"><Sep /></S>
          <S c="w-[20px]"><IPoly /></S>
          <S c="w-[24px]"><IPolyGray /></S>
          <S c="w-[6px]"><Sep /></S>
          <S c="w-[24px]"><ICsys /></S>
          <S c="w-[8px]"><Sep /></S>
          <S c="w-[20px]"><IAsm /></S>
          <Combo c="ml-[2px] w-[126px]" text="(-) Сборка (Тел-0, С" />
          <S c="w-[10px]"><Sep /></S>
          <div className="w-[54px]" />
          <Handle c="w-[11px]" />
        </div>
        <div className="h-full flex items-center rounded-[4px] bg-linear-to-b from-[#f4f5fb] via-[#e2e4f0] to-[#b0b2c8]">
          <S c="w-[6px]"><Grip /></S>
          <S c="w-[26px]"><IPartGray /></S>
          <S c="w-[20px]"><IPointer /></S>
          <S c="w-[10px]"><Sep /></S>
          <S c="w-[20px]"><IExtrude /></S>
          <S c="w-[24px]"><Prof><rect x="13" y="14" width="4" height="4" fill="none" stroke="#e01010" /></Prof></S>
          <S c="w-[18px]"><Prof><path d="M10 19c0-4 3-6 8-6" fill="none" stroke="#e01010" strokeWidth="1.500" /></Prof></S>
          <S c="w-[26px]"><Prof><path d="M10 19l8-7" stroke="#e01010" strokeWidth="1.500" /></Prof></S>
          <S c="w-[8px]"><Sep /></S>
          <S c="w-[22px]"><ISlot /></S>
          <S c="w-[20px]"><IPlateU /></S>
          <S c="w-[24px]"><IPlateDouble /></S>
          <S c="w-[20px]"><ICorner /></S>
          <S c="w-[22px]"><IBars /></S>
          <S c="w-[26px]"><IBracket /></S>
          <S c="w-[2px]"><Sep /></S>
          <S c="w-[28px]"><ISquare /></S>
          <S c="w-[16px]"><IChamfer /></S>
          <S c="w-[16px]"><Sep /></S>
          <S c="w-[12px]"><IFillet /></S>
          <S c="w-[18px]"><Sep /></S>
          <S c="w-[12px]"><IArray /></S>
          <S c="w-[18px]"><Sep /></S>
          <S c="w-[12px]"><ITreeBlocks /></S>
          <S c="w-[18px]"><Sep /></S>
          <S c="w-[12px]"><IRebuild /></S>
          <S c="w-[20px]"><Sep /></S>
          <S c="w-[8px]"><IChecklist /></S>
          <S c="w-[32px]"><IHelp /></S>
          <Handle c="w-[10px]" />
        </div>
        <div className="h-full flex-1 flex items-center rounded-[4px] bg-linear-to-b from-[#f4f5fb] via-[#e2e4f0] to-[#b0b2c8]">
          <S c="w-[10px]"><Grip /></S>
          <S c="w-[26px]"><IStripe /></S>
          <S c="w-[6px]"><Drop /></S>
          <S c="w-[14px]"><Sep /></S>
          <S c="w-[18px]"><IBeam /></S>
          <S c="w-[16px]"><Drop /></S>
          <S c="w-[4px]"><Sep /></S>
          <S c="w-[30px]"><IGrayPart /></S>
          <S c="w-[2px]"><Drop /></S>
          <div className="w-[9px]" />
          <S c="w-[20px]"><IGraySheet /></S>
          <S c="w-[10px]"><Drop /></S>
          <S c="w-[10px]"><Sep /></S>
          <S c="w-[20px]"><IGreenBox /></S>
          <S c="w-[10px]"><Sep /></S>
          <S c="w-[24px]"><ITol /></S>
          <S c="w-[10px]"><Drop /></S>
          <Handle c="flex-1" />
        </div>
      </div>

      {/* work area */}
      <div className="flex-1 min-h-0 flex bg-[#e9edfb]">
        <SideBar />
        <div className="flex-1 min-w-0 flex flex-col">
          {/* document tabs */}
          <div className="h-[25px] shrink-0 flex items-end bg-[#f0f0f0] border-b-2 border-[#a8a8a8]">
            <svg width="24" height="22" viewBox="0 0 24 22" className="block shrink-0">
              <defs>
                <linearGradient id="tabg" x1="0" x2="0" y1="0" y2="1">
                  <stop offset="0" stopColor="#ffffff" />
                  <stop offset="1" stopColor="#d8e0f6" />
                </linearGradient>
              </defs>
              <path d="M0 22L23 .5H24V22Z" fill="url(#tabg)" stroke="#9c9c9c" />
            </svg>
            <div className="w-[227px] h-[22px] flex items-center border-t border-r border-[#9c9c9c] rounded-tr-[3px] bg-linear-to-b from-white to-[#d8e0f6] font-['Liberation_Sans',sans-serif] text-[11.8px] font-bold text-[#111]">
              <div className="ml-[2px] w-[24px] flex justify-center">
                <Ic>
                  <path d="M3.500 2.500h10l3 3v12h-13z" fill="#e8e8e8" stroke="#000" strokeWidth="1.300" />
                  <circle cx="10" cy="11" r="3.500" fill="#fff" stroke="#000" />
                  <path d="M6 3l-1 4h9" fill="none" stroke="#000" />
                </Ic>
              </div>
              <span className="ml-[3px] w-[184px] whitespace-nowrap">Сборка рычага Tesla model S</span>
              <Ic w={9} h={9}>
                <path d="M1 1l7 7M8 1L1 8" stroke="#111" strokeWidth="1.800" />
              </Ic>
            </div>
            <div className="flex-1 flex justify-end items-center h-full pr-[7px]">
              <Ic w={9} h={5}>
                <path d="M0 0h9L4.500 5z" fill="#000" />
              </Ic>
            </div>
          </div>

          {/* tree and canvas */}
          <div className="h-[517px] shrink-0 flex">
            <Tree />
            <div className="ml-[4px] w-[1132px] h-[516px] border border-[#a4a4a4] bg-white p-px">
              <div className="w-full h-full bg-linear-to-b from-[#67a3df] to-[#f3f9fe]">
                <svg viewBox="235 125 1128 511" className="block w-full h-full" preserveAspectRatio="none">
                  <Arm />
                  <Triad />
                </svg>
              </div>
            </div>
          </div>

          {/* message panel */}
          <div className="flex-1 min-h-0 flex pt-[8px] pl-px">
            <div className="w-0 h-[54px] border-l-2 border-dotted border-[#9a9aa8]" />
            <div className="ml-[3px] w-[1328px] h-[34px] border border-[#a4a4a4] bg-white px-[3px] py-[2px]">
              <div className="w-full h-full bg-linear-to-b from-[#f6f7fb] to-[#cfd0e0]" />
            </div>
          </div>
        </div>
      </div>

      {/* status */}
      <div className="h-[19px] shrink-0 flex items-center bg-[#f0f0f0] border-t border-[#dadada] text-[11.1px] text-[#111] font-['Liberation_Sans',sans-serif]">
        <div className="w-[1279px] pl-[5px] h-full leading-[18px] border-r border-[#dadada]">
          Щелкните левой кнопкой мыши на объекте для его выделения (вместе с Ctrl - добавить к выделенным)
        </div>
      </div>

      {/* taskbar */}
      <div className="h-[40px] shrink-0 flex items-stretch bg-linear-to-r from-[#283a40] via-[#2a2422] to-[#2c3a3c] text-white text-[12px] font-['Liberation_Sans',sans-serif]">
        <S c="w-[48px]">
          <Ic w={16} h={16}>
            <path d="M0 2.300l6.700-1V7.500H0zM7.600 1.200L16 0v7.500H7.600zM0 8.400h6.700v6.300L0 13.700zM7.600 8.400H16V16l-8.400-1.200z" fill="#fff" />
          </Ic>
        </S>
        <S c="w-[48px]">
          <Ic w={16} h={16}>
            <circle cx="10" cy="6" r="5" fill="none" stroke="#fff" strokeWidth="1.200" />
            <path d="M6.500 9.500L1 15" stroke="#fff" strokeWidth="1.400" />
          </Ic>
        </S>
        <S c="w-[48px]">
          <Ic w={16} h={16}>
            <path d="M.5 4.500h10v7H.5zM.5 1h10M.5 15h10" fill="none" stroke="#fff" />
            <path d="M13 1v3M13 6h2v3h-2zM13 11v4" stroke="#fff" fill="#fff" />
          </Ic>
        </S>
        <div className="w-[7px]" />
        <div className="w-[40px] flex items-center justify-center border-b-2 border-[#f8d8b4]">
          <Ic w={22} h={20}>
            <path d="M0 2h8l2 2h12v14H0z" fill="#f6c84a" />
            <path d="M0 2h8l1 3H0z" fill="#e8a820" />
            <path d="M0 7h22v11H0z" fill="#fadc78" />
            <path d="M6 12h10v6h-3v-3H9v3H6z" fill="#2a9ae8" />
          </Ic>
        </div>
        <div className="w-[9px]" />
        <div className="w-[40px] flex items-center justify-center border-b-2 border-[#f8d8b4]">
          <Chrome />
        </div>
        <div className="w-[9px]" />
        <div className="w-[40px] flex items-center justify-center border-b-2 border-[#f8d8b4]">
          <Ic w={18} h={24}>
            <rect width="18" height="24" fill="#f6f6f6" />
            <rect x="2" y="2" width="14" height="4" fill="#333" />
            {[4, 9, 14].map((x) =>
              [9, 13, 17, 21].map((y) => <rect key={`${x}${y}`} x={x - 1.500} y={y - 1} width="3" height="2" fill="#333" />)
            )}
          </Ic>
        </div>
        <div className="w-[5px]" />
        <div className="w-[48px] flex items-center justify-center bg-[#50595e] border-b-2 border-[#f8d8b4]">
          <Kompas fill="#3f6f98" k="#2a8cf0" />
        </div>
        <div className="flex-1" />
        <S c="w-[16px]">
          <Ic w={12} h={7}>
            <path d="M.5 6.500L6 1l5.500 5.500" fill="none" stroke="#fff" />
          </Ic>
        </S>
        <S c="w-[28px]">
          <Ic w={17} h={12}>
            <path d="M5 2.500h10v7H5zM16 5v2" fill="none" stroke="#fff" />
            <path d="M1.500 1v3M4 1v3M.5 4h4v3h-4zM2.500 7v4" fill="none" stroke="#fff" />
          </Ic>
        </S>
        <S c="w-[20px]">
          <Ic w={17} h={13}>
            <path d="M.5 4.500h3l3.500-3.500v11L3.500 8.500h-3z" fill="none" stroke="#fff" />
            <path d="M9 4c1 1.500 1 3.500 0 5M11 2.500c2 2 2 6 0 8" fill="none" stroke="#fff" />
            <path d="M14 1c2.500 3 2.500 8 0 11" fill="none" stroke="#888" />
          </Ic>
        </S>
        <S c="w-[30px]">
          <Ic w={17} h={14}>
            <path d="M3.500 2.500h13v8h-13zM10 10.500v3M6 13.500h8" fill="none" stroke="#fff" />
            <rect x=".5" y=".5" width="5" height="4" fill="#283033" stroke="#fff" />
          </Ic>
        </S>
        <S c="w-[32px]">РУС</S>
        <div className="w-[68px] flex flex-col items-center justify-center leading-[18px]">
          <span>16:48</span>
          <span>13.04.2020</span>
        </div>
        <div className="w-[42px] relative flex items-center justify-center">
          <Ic w={16} h={14}>
            <path d="M0 0h16v11H6l-3 3v-3H0z" fill="#f4f4f4" />
            <path d="M2 3h12M2 6h12M2 8.500h8" stroke="#666" />
          </Ic>
          <span className="absolute left-[22px] top-[15px] w-[16px] h-[16px] rounded-full border border-[#999] bg-[#3a3f42] text-center text-[11px] leading-[14px]">5</span>
        </div>
        <div className="w-[12px]" />
      </div>
    </div>
  );
}
